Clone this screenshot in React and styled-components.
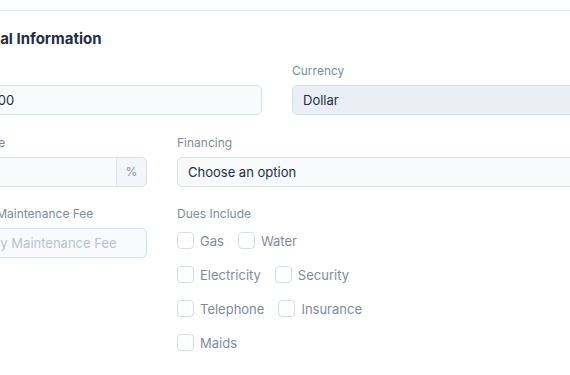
import React from "react";
import styled, { createGlobalStyle } from "styled-components";

const GlobalStyle = createGlobalStyle`
  html, body {
    margin: 0;
    padding: 0;
    background: #ffffff;
    overflow: hidden;
  }
  body {
    font-family: Inter, "Noto Sans", sans-serif;
    -webkit-font-smoothing: antialiased;
  }
  * { box-sizing: border-box; }
`;

const Page = styled.div`
  width: 660px;
  margin-left: -53px;
  padding-top: 10px;
`;

const Divider = styled.div`
  border-top: 1px solid #dde5ee;
  width: 760px;
`;

const Section = styled.section`
  padding-top: 18px;
`;

const Title = styled.h3`
  margin: 0 0 14px 0;
  font-size: 15px;
  line-height: 20px;
  font-weight: 700;
  color: #1f2d45;
`;

const Row = styled.div`
  display: grid;
  grid-template-columns: ${(p) => p.$cols};
  column-gap: 30px;
  margin-bottom: 19.5px;
`;

const Field = styled.div`
  display: flex;
  flex-direction: column;
  min-width: 0;
`;

const Label = styled.label`
  font-size: 12px;
  line-height: 16px;
  color: #7f8b9c;
  margin-bottom: 6px;
  white-space: nowrap;
`;

const Control = styled.div`
  height: 30px;
  display: flex;
  align-items: center;
  padding: 0 10px;
  border: 1px solid #d8e2ed;
  border-radius: 5px;
  background: ${(p) => (p.$muted ? "#ebeff5" : "#f8fafc")};
  font-size: 13px;
  color: ${(p) => (p.$placeholder ? "#b9c3ce" : "#1f2d45")};
  white-space: nowrap;
  overflow: hidden;
`;

const Group = styled.div`
  height: 30px;
  display: flex;
  border: 1px solid #d8e2ed;
  border-radius: 5px;
  background: #f8fafc;
  overflow: hidden;
`;

const GroupInput = styled.div`
  flex: 1;
`;

const Addon = styled.div`
  width: 30px;
  border-left: 1px solid #d8e2ed;
  background: #f3f5f8;
  display: flex;
  align-items: center;
  justify-content: center;
  font-size: 12px;
  color: #8893a2;
`;

const Checks = styled.div`
  display: flex;
  flex-wrap: wrap;
  column-gap: 14px;
  row-gap: 17px;
  width: 200px;
  margin-top: 4px;
`;

const Check = styled.label`
  display: flex;
  align-items: center;
  gap: 6px;
  height: 17px;
  font-size: 13px;
  color: #7f8b9c;
  white-space: nowrap;
`;

const Box = styled.span`
  width: 17px;
  height: 17px;
  border: 1px solid #d3deea;
  border-radius: 4px;
  background: #ffffff;
  flex: none;
`;

const dues = ["Gas", "Water", "Electricity", "Security", "Telephone", "Insurance", "Maids"];

export default function App() {
  return (
    <>
      <GlobalStyle />
      <Page>
        <Divider />
        <Section>
          <Title>Financial Information</Title>
          <Row $cols="1fr 1fr">
            <Field>
              <Label>Price</Label>
              <Control>7500000</Control>
            </Field>
            <Field>
              <Label>Currency</Label>
              <Control $muted>Dollar</Control>
            </Field>
          </Row>
          <Row $cols="200px 1fr">
            <Field>
              <Label>Brokerage</Label>
              <Group>
                <GroupInput />
                <Addon>%</Addon>
              </Group>
            </Field>
            <Field>
              <Label>Financing</Label>
              <Control>Choose an option</Control>
            </Field>
          </Row>
          <Row $cols="200px 200px 1fr">
            <Field>
              <Label>Monthly Maintenance Fee</Label>
              <Control $placeholder>Monthly Maintenance Fee</Control>
            </Field>
            <Field>
              <Label>Dues Include</Label>
              <Checks>
                {dues.map((d) => (
                  <Check key={d}>
                    <Box />
                    {d}
                  </Check>
                ))}
              </Checks>
            </Field>
          </Row>
        </Section>
      </Page>
    </>
  );
}
